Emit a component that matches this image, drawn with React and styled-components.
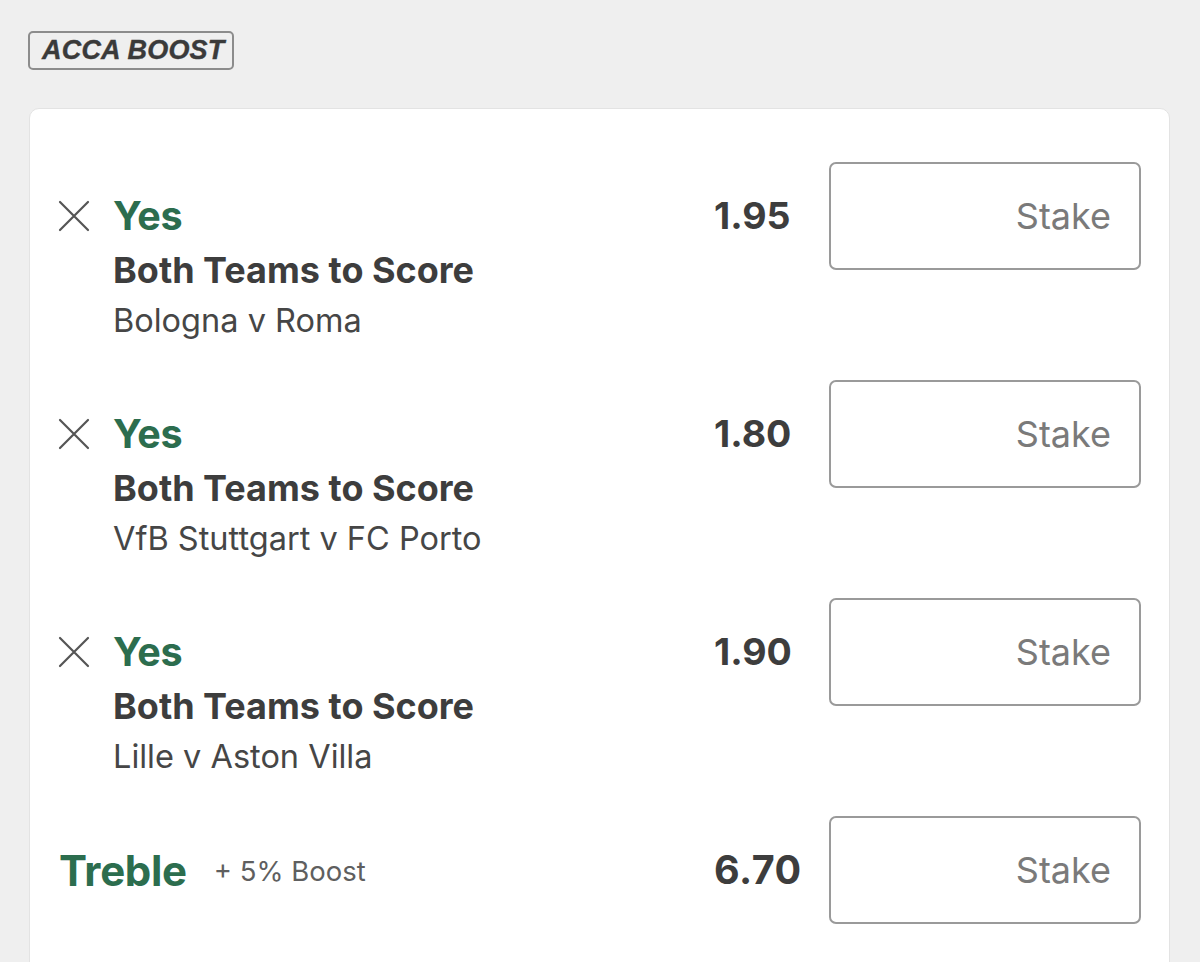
import React from 'react'
import styled, { createGlobalStyle } from 'styled-components'

const GlobalStyle = createGlobalStyle`
    html, body {
        margin: 0;
        padding: 0;
        background: #efefef;
    }
    body {
        font-family: Inter, "Liberation Sans", Arial, sans-serif;
        color: #3d3d3d;
    }
`

const selections = [
    { id: 1, pick: 'Yes', market: 'Both Teams to Score', event: 'Bologna v Roma', odds: '1.95' },
    { id: 2, pick: 'Yes', market: 'Both Teams to Score', event: 'VfB Stuttgart v FC Porto', odds: '1.80' },
    { id: 3, pick: 'Yes', market: 'Both Teams to Score', event: 'Lille v Aston Villa', odds: '1.90' },
]

function CloseIcon() {
    return (
        <svg width="32" height="32" viewBox="0 0 32 32" fill="none">
            <path d="M2 2 L30 30 M30 2 L2 30" stroke="#555" strokeWidth="2.2" strokeLinecap="round" />
        </svg>
    )
}

function App() {
    return (
        <Page>
            <GlobalStyle />
            <Badge>ACCA BOOST</Badge>

            <Card>
                {selections.map(s => (
                    <BetRow key={s.id}>
                        <Remove><CloseIcon /></Remove>
                        <Details>
                            <Pick>{s.pick}</Pick>
                            <Market>{s.market}</Market>
                            <Event>{s.event}</Event>
                        </Details>
                        <Odds>{s.odds}</Odds>
                        <StakeInput placeholder="Stake" />
                    </BetRow>
                ))}

                {/* multiple */}
                <MultiRow>
                    <Treble>Treble</Treble>
                    <BoostNote>+ 5% Boost</BoostNote>
                    <Odds $big>6.70</Odds>
                    <StakeInput placeholder="Stake" />
                </MultiRow>
            </Card>
        </Page>
    )
}

export default App


const Page = styled.div`
    padding: 31px 30px 0 29px;
    height: 962px;
    box-sizing: border-box;
    overflow: hidden;
`

const Badge = styled.div`
    display: inline-flex;
    align-items: center;
    box-sizing: border-box;
    height: 39px;
    width: 206px;
    margin-left: -1px;
    padding-left: 12px;
    border: 2px solid #8c8c8c;
    border-radius: 5px;
    font-family: "Liberation Sans", Arial, sans-serif;
    font-weight: 700;
    font-style: italic;
    font-size: 27px;
    letter-spacing: 0.2px;
    color: #3a3a3a;
    -webkit-text-stroke: 0.4px #3a3a3a;
`

const Card = styled.div`
    margin-top: 38px;
    background: #fff;
    border: 1px solid #e3e3e3;
    border-radius: 10px;
    padding: 53px 28px 60px 28px;
    display: flex;
    flex-direction: column;
    gap: 34px;
`

const BetRow = styled.div`
    display: grid;
    grid-template-columns: 32px 1fr 92px 312px;
    column-gap: 23px;
    align-items: start;
`

const Remove = styled.div`
    margin-top: 26px;
    height: 56px;
    display: flex;
    align-items: center;
    justify-content: center;
`

const Details = styled.div`
    margin-top: 26px;
    display: flex;
    flex-direction: column;
`

const Pick = styled.div`
    font-size: 39.5px;
    line-height: 56px;
    font-weight: 700;
    color: #2c6d4e;
    letter-spacing: -0.3px;
`

const Market = styled.div`
    font-size: 36px;
    line-height: 52px;
    font-weight: 700;
    color: #3d3d3d;
`

const Event = styled.div`
    font-size: 32.5px;
    line-height: 50px;
    font-weight: 400;
    color: #464646;
`

const Odds = styled.div`
    margin-top: ${p => (p.$big ? 0 : 26)}px;
    line-height: 56px;
    font-size: ${p => (p.$big ? 39.5 : 37.5)}px;
    font-weight: 700;
    color: #3d3d3d;
    letter-spacing: ${p => (p.$big ? 0.5 : 0)}px;
`

const StakeInput = styled.input`
    box-sizing: border-box;
    width: 312px;
    height: 108px;
    border: 2px solid #9a9a9a;
    border-radius: 7px;
    background: #fff;
    padding: 0 28px 0 20px;
    text-align: right;
    font-family: Inter, "Liberation Sans", Arial, sans-serif;
    font-size: 36px;
    color: #3d3d3d;
    outline: none;

    &::placeholder {
        color: #7a7a7a;
    }
`

const MultiRow = styled.div`
    display: grid;
    grid-template-columns: auto 1fr 92px 312px;
    column-gap: 23px;
    align-items: center;
    padding-left: 1px;
`

const Treble = styled.div`
    font-size: 42px;
    font-weight: 700;
    color: #2c6d4e;
    letter-spacing: -0.3px;
`

const BoostNote = styled.div`
    margin-left: 4px;
    font-size: 27.5px;
    color: #5f5f5f;
    padding-top: 2px;
`
